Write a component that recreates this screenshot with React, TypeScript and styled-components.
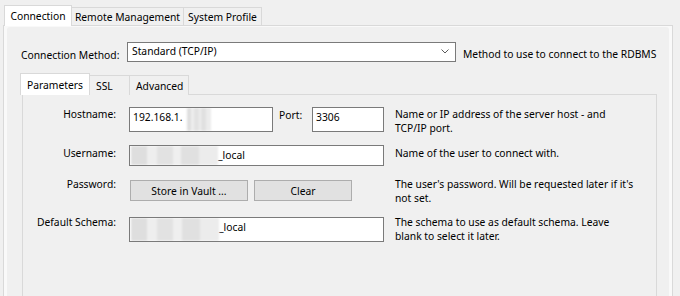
import React from 'react';
import styled, { createGlobalStyle } from 'styled-components';

const Global = createGlobalStyle`
  html, body { margin: 0; padding: 0; background: #f0f0f0; }
  body {
    font-family: "Noto Sans", "Open Sans", sans-serif;
    font-size: 10.3px;
    color: #000;
  }
  * { box-sizing: border-box; }
`;

const Window = styled.div`
  width: 680px;
  height: 296px;
  overflow: hidden;
  background: #f0f0f0;
`;

const TabStrip = styled.div`
  display: flex;
  align-items: flex-start;
  padding: 5px 0 0 4px;
  height: 26px;
  position: relative;
  z-index: 1;
`;

const Tab = styled.div<{ $active?: boolean; $w: number; $h: number; $drop: number }>`
  width: ${(p) => p.$w}px;
  height: ${(p) => p.$h}px;
  margin-top: ${(p) => p.$drop}px;
  border: 1px solid #d9d9d9;
  border-bottom: none;
  margin-left: -1px;
  background: ${(p) => (p.$active ? '#ffffff' : '#f0f0f0')};
  display: flex;
  justify-content: center;
  align-items: center;
  line-height: 14px;
  white-space: nowrap;
  position: relative;
  z-index: ${(p) => (p.$active ? 2 : 1)};
  &:first-child { margin-left: 0; }
`;

const SubTab = styled(Tab)`
  justify-content: flex-start;
  padding-left: 6px;
`;

const Panel = styled.div`
  margin: -1px 0 0 3px;
  width: 670px;
  height: 290px;
  border: 1px solid #d9d9d9;
  background: #f9f9f9;
  padding: 1px 3px 0 3px;
`;

const PanelBody = styled.div`
  height: 100%;
  background: #f0f0f0;
  border-radius: 3px 3px 0 0;
  padding: 15px 0 0 14px;
`;

const MethodRow = styled.div`
  display: flex;
  align-items: flex-start;
`;

const MethodLabel = styled.div`
  width: 106px;
  margin-top: 6px;
  line-height: 14px;
  white-space: nowrap;
`;

const Select = styled.div`
  width: 329px;
  height: 20px;
  border: 1px solid #7a7a7a;
  background: #fff;
  display: flex;
  align-items: flex-start;
  justify-content: space-between;
  padding: 1px 6px 0 4px;
  line-height: 14px;
`;

const Chevron = styled.svg`
  margin-top: 5px;
`;

const MethodDesc = styled.div`
  margin: 5px 0 0 7px;
  line-height: 14px;
  white-space: nowrap;
`;

const SubTabStrip = styled.div`
  display: flex;
  align-items: flex-start;
  margin: 11px 0 0 -1px;
  height: 22px;
  position: relative;
  z-index: 1;
`;

const SubPanel = styled.div`
  margin: -1px 0 0 1px;
  width: 635px;
  height: 220px;
  border: 1px solid #d9d9d9;
  background: #f0f0f0;
  padding-top: 12px;
`;

const FieldRow = styled.div<{ $gap: number }>`
  display: grid;
  grid-template-columns: 106px 266px 1fr;
  align-items: start;
  margin-top: ${(p) => p.$gap}px;
`;

const Label = styled.div<{ $mt?: number }>`
  text-align: right;
  padding-right: 13px;
  line-height: 14px;
  margin-top: ${(p) => p.$mt ?? 0}px;
  white-space: nowrap;
`;

const Controls = styled.div<{ $mt?: number }>`
  display: flex;
  align-items: flex-start;
  margin-top: ${(p) => p.$mt ?? 0}px;
`;

const Input = styled.div<{ $w: number; $h: number }>`
  width: ${(p) => p.$w}px;
  height: ${(p) => p.$h}px;
  border: 1px solid #7a7a7a;
  background: #fff;
  display: flex;
  align-items: stretch;
  padding-left: 3px;
  line-height: 14px;
  white-space: nowrap;
  overflow: hidden;
`;

const InputText = styled.span`
  padding-top: 2px;
`;

const Blur = styled.span<{ $w: number; $ml?: number }>`
  width: ${(p) => p.$w}px;
  margin-left: ${(p) => p.$ml ?? 0}px;
  flex: none;
  background:
    linear-gradient(90deg, #dedede 0 18%, #eeeeee 18% 30%, #e2e2e2 30% 48%, #efefef 48% 58%, #e0e0e0 58% 78%, #ececec 78% 100%);
  filter: blur(1px);
`;

const SideLabel = styled.div`
  width: 33px;
  margin: 1px 0 0 6px;
  line-height: 14px;
`;

const Button = styled.button<{ $w: number }>`
  width: ${(p) => p.$w}px;
  height: 21px;
  margin-right: 6px;
  border: 1px solid #adadad;
  background: #e1e1e1;
  font: inherit;
  line-height: 14px;
  padding: 0;
  color: #000;
  &:first-child { margin-left: 1px; }
`;

const Desc = styled.div<{ $mt?: number }>`
  line-height: 14px;
  white-space: nowrap;
  margin-top: ${(p) => p.$mt ?? 0}px;
`;

export default function App() {
  return (
    <Window>
      <Global />
      <TabStrip>
        <Tab $active $w={68} $h={21} $drop={0}>Connection</Tab>
        <Tab $w={113} $h={18} $drop={2}>Remote Management</Tab>
        <Tab $w={79} $h={18} $drop={2}>System Profile</Tab>
      </TabStrip>
      <Panel>
        <PanelBody>
          <MethodRow>
            <MethodLabel>Connection Method:</MethodLabel>
            <Select>
              <span>Standard (TCP/IP)</span>
              <Chevron width="8" height="5" viewBox="0 0 8 5">
                <polyline points="0.5,0.5 4,4 7.5,0.5" fill="none" stroke="#5a5a5a" strokeWidth="1" />
              </Chevron>
            </Select>
            <MethodDesc>Method to use to connect to the RDBMS</MethodDesc>
          </MethodRow>

          <SubTabStrip>
            <SubTab $active $w={70} $h={22} $drop={0}>Parameters</SubTab>
            <SubTab $w={41} $h={20} $drop={2}>SSL</SubTab>
            <SubTab $w={60} $h={20} $drop={2}>Advanced</SubTab>
          </SubTabStrip>

          <SubPanel>
            <FieldRow $gap={0}>
              <Label>Hostname:</Label>
              <Controls>
                <Input $w={144} $h={25}>
                  <InputText>192.168.1.</InputText>
                  <Blur $w={24} $ml={4} />
                </Input>
                <SideLabel>Port:</SideLabel>
                <Input $w={72} $h={25}>
                  <InputText>3306</InputText>
                </Input>
              </Controls>
              <Desc>
                Name or IP address of the server host - and
                <br />
                TCP/IP port.
              </Desc>
            </FieldRow>

            <FieldRow $gap={10}>
              <Label $mt={1}>Username:</Label>
              <Controls>
                <Input $w={255} $h={21}>
                  <Blur $w={87} $ml={-2} />
                  <InputText>_local</InputText>
                </Input>
              </Controls>
              <Desc $mt={1}>Name of the user to connect with.</Desc>
            </FieldRow>

            <FieldRow $gap={11}>
              <Label>Password:</Label>
              <Controls $mt={3}>
                <Button $w={118}>Store in Vault ...</Button>
                <Button $w={98}>Clear</Button>
              </Controls>
              <Desc>
                The user's password. Will be requested later if it's
                <br />
                not set.
              </Desc>
            </FieldRow>

            <FieldRow $gap={10}>
              <Label>Default Schema:</Label>
              <Controls $mt={2}>
                <Input $w={255} $h={25}>
                  <Blur $w={88} $ml={-2} />
                  <InputText>_local</InputText>
                </Input>
              </Controls>
              <Desc>
                The schema to use as default schema. Leave
                <br />
                blank to select it later.
              </Desc>
            </FieldRow>
          </SubPanel>
        </PanelBody>
      </Panel>
    </Window>
  );
}
